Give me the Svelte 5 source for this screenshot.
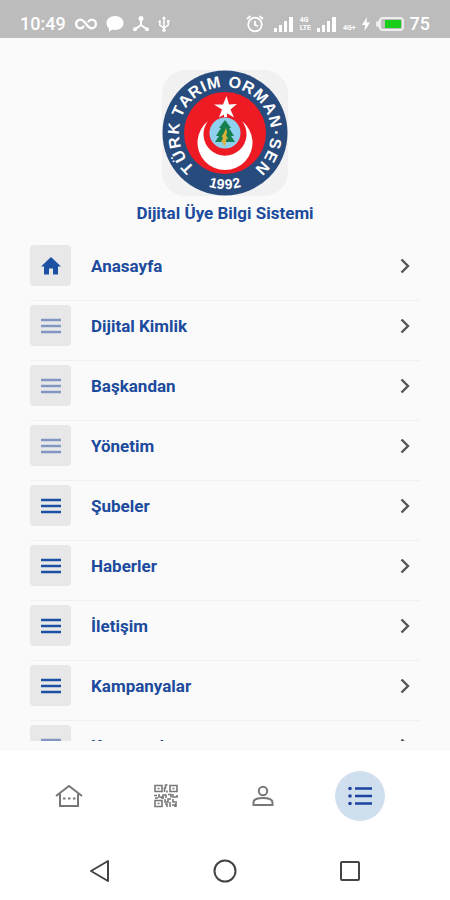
<script lang="ts">
    type Row = { label: string; icon: string; soft?: boolean };
    type Letter = [string, number];

    const rows: Row[] = [
        { label: "Anasayfa", icon: "home" },
        { label: "Dijital Kimlik", icon: "menu", soft: true },
        { label: "Başkandan", icon: "menu", soft: true },
        { label: "Yönetim", icon: "menu", soft: true },
        { label: "Şubeler", icon: "menu" },
        { label: "Haberler", icon: "menu" },
        { label: "İletişim", icon: "menu" },
        { label: "Kampanyalar", icon: "menu" },
        { label: "Kurumsal", icon: "menu", soft: true },
    ];

    // letters around the seal, degrees clockwise from the top
    const ring: Letter[] = [
        ["T", 227], ["Ü", 243], ["R", 259], ["K", 275],
        ["T", 295], ["A", 309], ["R", 324], ["I", 335], ["M", 347],
        ["O", 11], ["R", 27], ["M", 44], ["A", 61], ["N", 77],
        ["·", 90], ["S", 102], ["E", 117], ["N", 133],
    ];
    const year: Letter[] = [["1", 13], ["9", 5], ["9", -4], ["2", -13]];

    let active = $state(3);
</script>

{#snippet signal()}
    <svg width="20" height="16" viewBox="0 0 20 16" fill="#fff">
        <rect x="0" y="12" width="3" height="4" />
        <rect x="5" y="9" width="3" height="7" />
        <rect x="10" y="5" width="3" height="11" />
        <rect x="15" y="1" width="4" height="15" />
    </svg>
{/snippet}

<div class="screen">
    <div class="status">
        <div class="left">
            <span>10:49</span>
            <svg width="22" height="14" viewBox="0 0 22 14" fill="none" stroke="#fff" stroke-width="2.4">
                <path d="M13 5.2C14 3.6 15 2.6 16.6 2.6a4.2 4.2 0 0 1 0 8.6C12 11.2 10.2 2.6 5.4 2.6a4.2 4.2 0 0 0 0 8.6C7 11.2 8 10.4 9 8.8" />
            </svg>
            <svg width="18" height="16" viewBox="0 0 18 16" fill="#fff">
                <path d="M9 0c5 0 8.500 3 8.500 7S14 14 9 14c-1 0-2 0-3-.4L3 16v-3.600C1.300 11 .5 9.200.5 7 .5 3 4 0 9 0z" />
            </svg>
            <svg width="16" height="16" viewBox="0 0 16 16" fill="none" stroke="#fff" stroke-width="2">
                <path d="M8 3v6L2.500 13M8 9l5.500 4" />
                <circle cx="8" cy="2.500" r="1.500" fill="#fff" />
                <circle cx="2" cy="13.200" r="1" fill="#fff" />
                <circle cx="14" cy="13.200" r="1" fill="#fff" />
            </svg>
            <svg width="12" height="16" viewBox="0 0 12 16" fill="none" stroke="#fff" stroke-width="1.500">
                <path d="M6 2v12M1.800 6v3.200L6 12l4.200-2.800V6" />
                <path d="M6 0l2 3H4z" fill="#fff" stroke="none" />
                <circle cx="1.800" cy="5.500" r="1.200" fill="#fff" stroke="none" />
                <path d="M9 4h2.500v2.500H9z" fill="#fff" stroke="none" />
                <circle cx="6" cy="14.200" r="1.700" fill="#fff" stroke="none" />
            </svg>
        </div>
        <div class="right">
            <svg width="18" height="18" viewBox="0 0 18 18" fill="none" stroke="#fff" stroke-width="1.800">
                <circle cx="9" cy="9.500" r="6.800" />
                <path d="M9 6v4l3 1M1 4l3.500-3M17 4l-3.500-3" />
            </svg>
            {@render signal()}
            <span class="net"><b>4G</b><b>LTE</b></span>
            {@render signal()}
            <span class="net low"><b>4G+</b></span>
            <svg width="8" height="14" viewBox="0 0 8 14" fill="#fff">
                <path d="M5 0L0 8h3.200L2.500 14 8 5.500H4.500z" />
            </svg>
            <svg width="28" height="14" viewBox="0 0 28 14">
                <rect x="4" y="1" width="23" height="12" rx="3" fill="#bcbcbc" stroke="#eee" stroke-width="2" />
                <path d="M4 3L0 5v4l4 2z" fill="#eee" />
                <rect x="9" y="3" width="16" height="8" fill="#18ce18" />
            </svg>
            <span>75</span>
        </div>
    </div>

    <main>
        <header>
            <div class="logo">
                <svg viewBox="-63 -63 126 126" role="img" aria-label="Türk Tarım Orman-Sen 1992">
                    <circle r="62.500" fill="#284b7d" />
                    <circle r="41" fill="#ee1b24" />
                    <path d="M-17-12A27.500 27.500 0 1 0 17-12A21.500 21.500 0 1 1-17-12z" fill="#fff" />
                    <path d="M1.500-37L4-28.500 12-29 5.500-23.500 9-15.500 1.500-20-6-15.500-3-23.500-11-28.500-2-28.500z" fill="#fff" />
                    <path d="M-1-22h3v6h-3z" fill="#fff" />
                    <circle r="15.500" fill="#8ed0ee" />
                    <path d="M0-13L6-5H4L9 3H6l4 6H-10l4-6H-9l5-8H-6z" fill="#15804d" />
                    <path d="M-1 0l2-5 1 4-1 4 2 2-2 2v3l-2 4-1-4-2-2 2-2-1-3z" fill="#d9b13b" />
                    {#each ring as [ch, deg]}
                        <text class="ring" y="-46" transform="rotate({deg})">{ch}</text>
                    {/each}
                    {#each year as [ch, deg]}
                        <text class="year" y="56" transform="rotate({deg})">{ch}</text>
                    {/each}
                </svg>
            </div>
            <h1>Dijital Üye Bilgi Sistemi</h1>
        </header>

        <ul>
            {#each rows as row}
                <li>
                    <a href="#{row.icon}">
                        <span class="tile" class:soft={row.soft}>
                            {#if row.icon === "home"}
                                <svg width="24" height="24" viewBox="0 0 24 24" fill="currentColor">
                                    <path d="M10 20.500v-6h4v6h5v-8h3L12 3 2 12.500h3v8z" />
                                </svg>
                            {:else}
                                <svg width="20" height="16" viewBox="0 0 20 16" fill="currentColor">
                                    <path d="M0 .8h20v2.400H0zM0 6.800h20v2.400H0zM0 12.800h20v2.400H0z" />
                                </svg>
                            {/if}
                        </span>
                        <span class="label">{row.label}</span>
                        <svg width="10" height="16" viewBox="0 0 10 16" fill="none" stroke="#555" stroke-width="2.400">
                            <path d="M1.500 1.500L8 8l-6.500 6.500" />
                        </svg>
                    </a>
                </li>
            {/each}
        </ul>
    </main>

    <nav class="tabs">
        <button class:active={active === 0} aria-label="Ev" onclick={() => (active = 0)}>
            <svg width="28" height="24" viewBox="0 0 28 24" fill="none" stroke="currentColor" stroke-width="2">
                <path d="M1 12L14 2l13 10M5 10v12h18V10" />
                <path d="M8 14.500h2.500M13 14.500h2.500M18 14.500h2.500" />
            </svg>
        </button>
        <button class:active={active === 1} aria-label="Karekod" onclick={() => (active = 1)}>
            <svg width="24" height="24" viewBox="0 0 24 24" fill="none" stroke="currentColor" stroke-width="1.600">
                <path d="M1 1.500h7v6H1zM16 1.500h7v6h-7zM1 16.500h7v6H1z" />
                <path d="M3.500 4.500h2M18.500 4.500h2M3.500 19.500h2" />
                <path d="M13.500 1h-2v3h-1v4M13 6.500v2M0 11.500h3M5 10v3h4v-2h3v3M1 14h3M14 10.500h3v3M19 10v3h4v-2M11 15v3h3v-3h3M19 15v3h4M11 20h2v3M16 18v5M18 21h3v2M22 19v4M7 14h3" />
            </svg>
        </button>
        <button class:active={active === 2} aria-label="Profil" onclick={() => (active = 2)}>
            <svg width="22" height="22" viewBox="0 0 22 22" fill="none" stroke="currentColor" stroke-width="2">
                <circle cx="11" cy="6" r="4.200" />
                <path d="M1.500 20v-2.500C1.500 14.500 6 13 11 13s9.500 1.500 9.500 4.500V20z" />
            </svg>
        </button>
        <button class:active={active === 3} aria-label="Menü" onclick={() => (active = 3)}>
            <svg width="24" height="20" viewBox="0 0 24 20" fill="currentColor">
                <path d="M7 1.300h17v2.400H7zM7 8.800h17v2.400H7zM7 16.300h17v2.400H7z" />
                <circle cx="2" cy="2.500" r="1.800" />
                <circle cx="2" cy="10" r="1.800" />
                <circle cx="2" cy="17.500" r="1.800" />
            </svg>
        </button>
    </nav>

    <nav class="system">
        <button aria-label="Geri">
            <svg width="22" height="24" viewBox="0 0 22 24"><path d="M2 12L19 2v20z" /></svg>
        </button>
        <button aria-label="Ana ekran">
            <svg width="24" height="24" viewBox="0 0 24 24"><circle cx="12" cy="12" r="10.500" /></svg>
        </button>
        <button aria-label="Son uygulamalar">
            <svg width="22" height="22" viewBox="0 0 22 22"><rect x="2" y="2" width="18" height="18" rx="1" /></svg>
        </button>
    </nav>
</div>

<style>
    :global(body) {
        margin: 0;
        background: #fff;
    }

    .screen {
        display: flex;
        flex-direction: column;
        height: 100vh;
        font-family: Roboto, "Liberation Sans", sans-serif;
        color: #1c4a9c;
    }

    svg {
        display: block;
        flex: none;
    }

    .status {
        display: flex;
        justify-content: space-between;
        height: 28px;
        padding: 10px 20px 0;
        background: #bcbcbc;
        color: #fff;
        font-size: 18px;
        font-weight: 500;
        line-height: 28px;
    }

    .left,
    .right {
        display: flex;
        align-items: center;
        gap: 9px;
    }

    .right {
        gap: 6px;
    }

    .right svg:first-child {
        margin-right: 4px;
    }

    .net {
        display: flex;
        flex-direction: column;
        font-size: 7px;
        line-height: 8px;
    }

    .low {
        padding-top: 8px;
    }

    main {
        display: flex;
        flex-direction: column;
        flex: 1;
        min-height: 0;
        padding: 32px 30px 10px;
        background: #fafafa;
    }

    header {
        display: flex;
        flex-direction: column;
        align-items: center;
        flex: none;
    }

    .logo {
        width: 126px;
        border-radius: 24px;
        background: #f1f1f1;
    }

    .ring,
    .year {
        fill: #fff;
        font-family: "Liberation Sans", Arial, sans-serif;
        font-size: 16px;
        font-weight: 700;
        text-anchor: middle;
    }

    .year {
        font-size: 14px;
    }

    h1 {
        margin: 6px 0 17px;
        font-size: 17px;
        font-weight: 700;
        line-height: 22px;
    }

    ul {
        flex: 1;
        min-height: 0;
        margin: 0;
        padding: 0;
        overflow-y: auto;
        scrollbar-width: none;
        list-style: none;
    }

    li {
        height: 55px;
        padding-bottom: 4px;
        border-bottom: 1px solid #f0f0f0;
    }

    a {
        display: flex;
        align-items: center;
        padding: 4px 10px 0 0;
        color: inherit;
        text-decoration: none;
    }

    .tile {
        display: flex;
        align-items: center;
        justify-content: center;
        width: 41px;
        height: 41px;
        margin-right: 20px;
        border-radius: 4px;
        background: #e8e8e8;
        color: #1c50a2;
    }

    .soft {
        color: #8296c4;
    }

    .label {
        flex: 1;
        font-size: 17px;
        font-weight: 700;
    }

    button {
        display: flex;
        align-items: center;
        justify-content: center;
        width: 50px;
        height: 50px;
        padding: 0;
        border: 0;
        border-radius: 50%;
        background: none;
        color: #777;
    }

    .active {
        background: #cfdfed;
        color: #1c43a0;
    }

    .tabs,
    .system {
        display: grid;
        flex: none;
        align-items: center;
        justify-items: center;
    }

    .tabs {
        grid-template-columns: repeat(4, 1fr);
        height: 90px;
        padding: 0 42px 0 20px;
    }

    .system {
        grid-template-columns: repeat(3, 1fr);
        height: 59px;
        padding: 0 38px;
    }

    .system svg {
        fill: none;
        stroke: #444;
        stroke-width: 2;
        stroke-linejoin: round;
    }
</style>
